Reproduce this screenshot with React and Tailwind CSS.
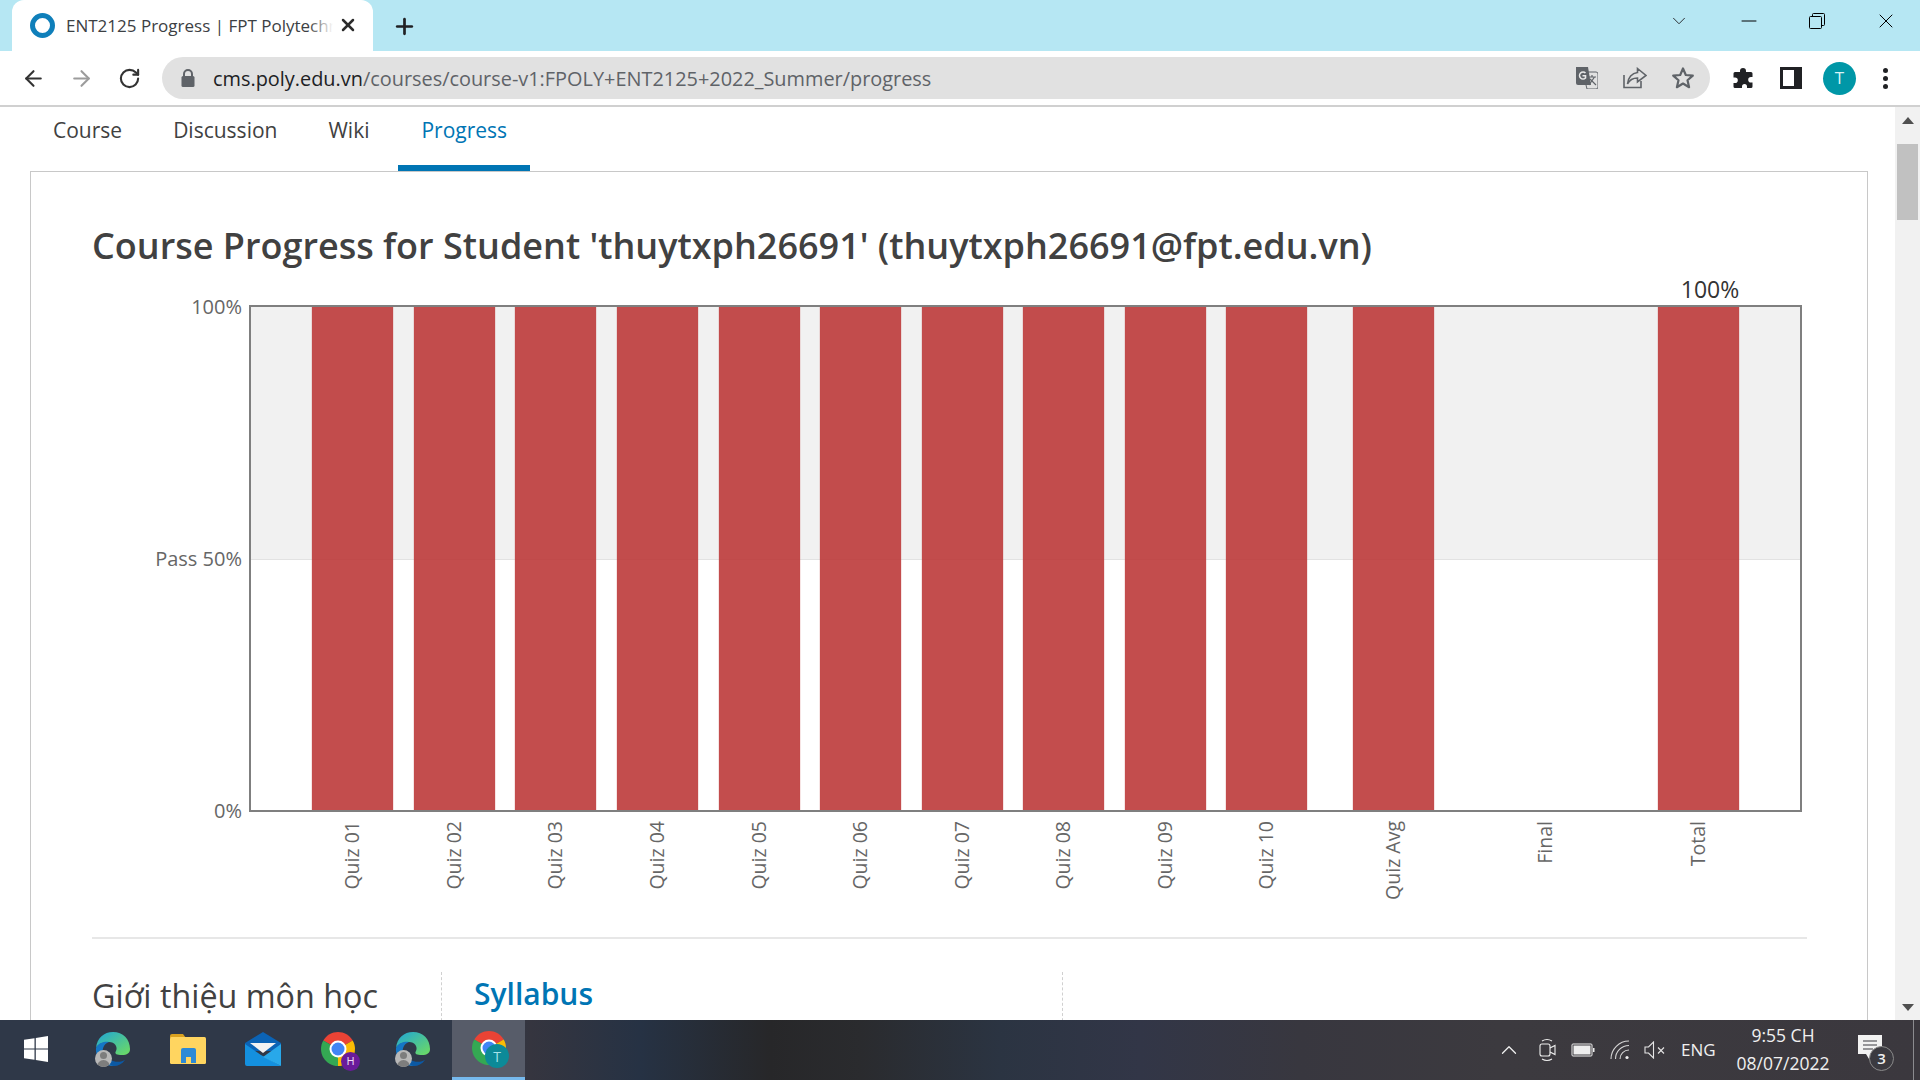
import React from 'react';
import { ArrowLeft, ArrowRight, RotateCw, Plus, X, ChevronDown, ChevronUp, Minus } from 'lucide-react';

const bars = [
  { label: 'Quiz 01', x: 312 },
  { label: 'Quiz 02', x: 414 },
  { label: 'Quiz 03', x: 515 },
  { label: 'Quiz 04', x: 617 },
  { label: 'Quiz 05', x: 719 },
  { label: 'Quiz 06', x: 820 },
  { label: 'Quiz 07', x: 922 },
  { label: 'Quiz 08', x: 1023 },
  { label: 'Quiz 09', x: 1125 },
  { label: 'Quiz 10', x: 1226 },
  { label: 'Quiz Avg', x: 1353 },
  { label: 'Final', x: 1505, empty: true },
  { label: 'Total', x: 1658 },
];

// svg sits at page x=92, y=270
const ox = 92;
const oy = 270;

const ProgressChart = () => (
  <svg width="1715" height="669" className="block" style={{ fontFamily: '"Open Sans", sans-serif' }}>
    <rect x={250 - ox} y={306 - oy} width="1551" height="253" fill="#f1f1f1" />
    <line x1={250 - ox} x2={1801 - ox} y1={559.5 - oy} y2={559.5 - oy} stroke="#e2e2e2" />
    {bars.filter(b => !b.empty).map(b => (
      <rect
        key={b.label}
        x={b.x - ox}
        y={306 - oy}
        width="81"
        height="505"
        fill="#bd3a3a"
        fillOpacity="0.9"
        stroke="#c34b4b"
        strokeOpacity="0.3"
      />
    ))}
    <rect x={250 - ox} y={306 - oy} width="1551" height="505" fill="none" stroke="#7f7f7f" strokeWidth="2" />
    <g fontSize="20" fill="#666666" textAnchor="end">
      <text x={242 - ox} y={314 - oy}>100%</text>
      <text x={242 - ox} y={566 - oy}>Pass 50%</text>
      <text x={242 - ox} y={818 - oy}>0%</text>
    </g>
    <text x={1710 - ox} y={298 - oy} fontSize="23" fill="#333333" textAnchor="middle">100%</text>
    {bars.map(b => {
      const cx = b.x + 40 - ox + 7;
      return (
        <text
          key={b.label}
          transform={`translate(${cx} ${821 - oy}) rotate(-90)`}
          fontSize="19.5"
          fill="#666666"
          textAnchor="end"
        >
          {b.label}
        </text>
      );
    })}
  </svg>
);

const Chrome = ({ size = 36 }) => (
  <svg width={size} height={size} viewBox="0 0 36 36">
    <path d="M18 18 L3.3 9.5 A17 17 0 0 1 32.7 9.5 Z" fill="#ea4335" />
    <path d="M18 18 L32.7 9.5 A17 17 0 0 1 18 35 Z" fill="#fbbc04" />
    <path d="M18 18 L18 35 A17 17 0 0 1 3.3 9.5 Z" fill="#34a853" />
    <circle cx="18" cy="18" r="8.5" fill="#fff" />
    <circle cx="18" cy="18" r="6.5" fill="#4285f4" />
  </svg>
);

const Edge = () => (
  <div className="relative w-9 h-9">
    <svg width="36" height="36" viewBox="0 0 36 36">
      <defs>
        <linearGradient id="edgeA" x1="0" y1="0" x2="1" y2="1">
          <stop offset="0" stopColor="#1fa5d8" />
          <stop offset="1" stopColor="#6fdc5f" />
        </linearGradient>
      </defs>
      <path d="M1 17 C2 7 9 1 18 1 C28 1 35 8 35 18 C35 22 32 24 27 24 C22 24 19 23 21 20 C23 16 20 11 14 11 C8 11 3 13 1 17 Z" fill="url(#edgeA)" />
      <path d="M1 17 C3 12 9 10 14 11 C8 13 6 20 9 26 C11 31 16 34 21 35 C10 36 0 28 1 17 Z" fill="#1576c4" />
      <path d="M12 24 C14 30 22 33 30 29 C27 33 23 35 19 35 C15 35 12 30 12 24 Z" fill="#0c59a4" />
    </svg>
    <span className="absolute left-0 bottom-0 w-[17px] h-[17px] rounded-full bg-[#b8b8b8] overflow-hidden flex flex-col items-center">
      <span className="w-[7px] h-[7px] rounded-full bg-[#7d7d7d] mt-[2px]" />
      <span className="w-[13px] h-[8px] rounded-t-full bg-[#7d7d7d] mt-[1px]" />
    </span>
  </div>
);

const Folder = () => (
  <svg width="36" height="32" viewBox="0 0 36 32">
    <path d="M0 3 Q0 1 2 1 H13 L16 5 H0 Z" fill="#d9a11f" />
    <rect x="0" y="4" width="36" height="27" rx="1.5" fill="#ffd560" />
    <path d="M11 30 V17 Q11 15 13 15 H24 Q26 15 26 17 V30 H21 V24 H16 V30 Z" fill="#2c8ad6" />
  </svg>
);

const Mail = () => (
  <svg width="36" height="36" viewBox="0 0 36 36">
    <path d="M0 12 L18 1 L36 12 V20 H0 Z" fill="#0b63b5" />
    <path d="M5 12 H31 L18 22 Z" fill="#f2f2f2" />
    <path d="M16 24 L36 35 H2 Q0 35 0 33 V13 Z" fill="#1490df" />
    <path d="M18 26 L36 13 V35 Z" fill="#28a8ea" />
  </svg>
);

const TaskIcon = ({ active, children }) => (
  <div className={`relative h-[60px] shrink-0 flex items-center justify-center pb-[2px] ${active ? 'ml-[2px] w-[73px] bg-[#575c69] border-b-[3px] border-[#76b9ed]' : 'w-[75px]'}`}>
    {children}
  </div>
);

const App = () => {
  return (
    <div
      className="relative w-[1920px] h-[1080px] overflow-hidden flex flex-col bg-white"
      style={{ fontFamily: '"Open Sans", sans-serif' }}
    >
      {/* tab strip */}
      <div className="h-[51px] shrink-0 bg-[#b6e7f3] flex items-end pl-[12px]">
        <div className="w-[361px] h-[51px] bg-white rounded-t-[12px] flex items-center pl-[18px] relative">
          <span className="w-[25px] h-[25px] rounded-full border-[5px] border-[#0f7fba] shrink-0" />
          <span className="ml-[11px] w-[267px] whitespace-nowrap overflow-hidden text-[17px] text-[#3c4043] relative">
            ENT2125 Progress | FPT Polytechnic
            <span className="absolute right-0 top-0 h-full w-[24px] bg-gradient-to-r from-transparent to-white" />
          </span>
          <X size={20} strokeWidth={3} className="absolute left-[326px] top-[15px] text-[#2c2c2c]" />
        </div>
        <Plus size={25} strokeWidth={2.6} className="ml-[19px] mb-[12px] text-[#202124]" />
        <div className="ml-auto flex items-center h-[42px] self-start">
          <ChevronDown size={22} strokeWidth={1} className="text-[#202124] mr-[47px]" />
          <Minus size={24} strokeWidth={1} className="text-black mr-[48px]" />
          <svg width="16" height="16" viewBox="0 0 16 16" fill="none" stroke="#000" className="mr-[49px]">
            <rect x="0.5" y="3.5" width="12" height="12" rx="1" />
            <path d="M3.5 3.5 V1.5 Q3.5 .5 4.5 .5 H14.5 Q15.5 .5 15.5 1.5 V11.5 Q15.5 12.5 14.5 12.5 H12.5" />
          </svg>
          <X size={24} strokeWidth={1} className="text-black mr-[22px]" />
        </div>
      </div>

      {/* toolbar */}
      <div className="h-[56px] shrink-0 bg-white border-b-2 border-[#d0d0d0] flex items-center relative">
        <ArrowLeft size={25} strokeWidth={2} className="ml-[21px] text-[#333]" />
        <ArrowRight size={25} strokeWidth={2} className="ml-[23px] text-[#9c9c9c]" />
        <RotateCw size={23} strokeWidth={2.2} className="ml-[24px] text-[#333]" />
        <div className="ml-[21px] w-[1548px] h-[42px] rounded-full bg-[#e1e1e1] flex items-center pl-[19px] relative">
          <svg width="14" height="18" viewBox="0 0 14 18">
            <path d="M3 8 V5 a4 4 0 0 1 8 0 V8" fill="none" stroke="#5f6368" strokeWidth="2" />
            <rect x="0.5" y="7" width="13" height="11" rx="1.5" fill="#5f6368" />
          </svg>
          <span className="ml-[18px] pt-[2px] text-[19.9px] whitespace-nowrap text-[#5f6368]">
            <span className="text-[#202124]">cms.poly.edu.vn</span>/courses/course-v1:FPOLY+ENT2125+2022_Summer/progress
          </span>
          {/* translate */}
          <svg width="22" height="22" viewBox="0 0 22 22" className="absolute left-[1414px] top-[10px]">
            <path d="M0 0 H12 L15 18 H2 Q0 18 0 16 Z" fill="#5f6368" />
            <path d="M10 5 H20 Q22 5 22 7 V20 Q22 22 20 22 H11 L10 18" fill="none" stroke="#5f6368" />
            <path d="M9.5 6 A3.5 3.5 0 1 0 9.5 11 V8.7 H6.5" fill="none" stroke="#e8e8e8" strokeWidth="1.6" />
            <path d="M12 10 H20 M16 8 V10 M13 18 L18.5 10 M14 12 L20 18" fill="none" stroke="#5f6368" strokeWidth="1.2" />
          </svg>
          <svg width="24" height="22" viewBox="0 0 24 22" fill="none" stroke="#5f6368" strokeWidth="1.6" className="absolute left-[1461px] top-[10px]">
            <path d="M1 8 V20.5 H18 V14" />
            <path d="M14.5 1.5 L23 8.5 L14.5 15 V11 C9.5 11 6.5 13 4.5 17 C5 10.5 9 6 14.5 5.5 Z" />
          </svg>
          <svg width="24" height="24" viewBox="0 0 24 24" fill="none" stroke="#5f6368" strokeWidth="2.2" strokeLinejoin="round" className="absolute left-[1509px] top-[9px]">
            <path d="M12 2.5 L14.8 9 L21.8 9.6 L16.5 14.3 L18.1 21.2 L12 17.5 L5.9 21.2 L7.5 14.3 L2.2 9.6 L9.2 9 Z" />
          </svg>
        </div>
        <svg width="22" height="22" viewBox="0 0 22 22" fill="#202124" className="ml-[22px]">
          <path d="M8 4 a3 3 0 0 1 6 0 V5 H19 a1.5 1.5 0 0 1 1.5 1.5 V10 H19 a2.8 2.8 0 0 0 0 5.6 H20.5 V19.5 a1.5 1.5 0 0 1 -1.5 1.5 H15 V19.5 a2.5 2.5 0 0 0 -5 0 V21 H3 a1.5 1.5 0 0 1 -1.5 -1.5 V16 H3 a2.8 2.8 0 0 0 0 -5.6 H1.5 V6.5 A1.5 1.5 0 0 1 3 5 H8 Z" />
        </svg>
        <div className="ml-[26px] w-[22px] h-[22px] border-[3px] border-[#202124] flex">
          <span className="w-[11px] bg-white" />
          <span className="flex-1 bg-[#202124]" />
        </div>
        <span className="ml-[21px] w-[33px] h-[33px] rounded-full bg-[#0097a7] text-[#d9f3f6] text-[17px] flex items-center justify-center">T</span>
        <div className="ml-[27px] flex flex-col gap-[3px]">
          <span className="w-[5px] h-[5px] rounded-full bg-[#202124]" />
          <span className="w-[5px] h-[5px] rounded-full bg-[#202124]" />
          <span className="w-[5px] h-[5px] rounded-full bg-[#202124]" />
        </div>
      </div>

      {/* page */}
      <div className="flex-1 min-h-0 flex">
        <div className="w-[1895px] overflow-hidden">
          <nav className="h-[64px] flex pl-[30px] text-[21px] text-[#414141]">
            <a className="px-[23px] pt-[8px]">Course</a>
            <a className="px-[28px] pt-[8px]">Discussion</a>
            <a className="pl-[23px] pr-[29px] pt-[8px]">Wiki</a>
            <a className="px-[23px] pt-[8px] text-[#0075b4] border-b-[6px] border-[#0075b4]">Progress</a>
          </nav>
          <div className="ml-[30px] w-[1838px] h-[900px] border border-[#c8c8c8] pl-[61px] pr-[60px]">
            <h1 className="h-[98px] pt-[46px] text-[36px] leading-[56px] font-semibold text-[#414141] whitespace-nowrap">
              Course Progress for Student 'thuytxph26691' (thuytxph26691@fpt.edu.vn)
            </h1>
            <ProgressChart />
            <div className="border-t-2 border-[#e7e7e7] flex mt-[-2px] pt-[33px]">
              <h2 className="w-[349px] h-[80px] text-[32.3px] leading-[46px] text-[#414141] whitespace-nowrap">Giới thiệu môn học</h2>
              <div className="w-[622px] h-[80px] border-l border-r border-dashed border-[#d0d0d0] pl-[32px]">
                <h3 className="text-[30px] leading-[44px] font-semibold text-[#0075b4]">Syllabus</h3>
              </div>
            </div>
          </div>
        </div>
        {/* scrollbar */}
        <div className="w-[25px] bg-[#f1f1f1] flex flex-col items-center relative">
          <span className="mt-[10px] w-0 h-0 border-l-[6px] border-r-[6px] border-b-[7px] border-l-transparent border-r-transparent border-b-[#505050]" />
          <span className="mt-[20px] w-[21px] h-[76px] bg-[#c1c1c1]" />
          <span className="mt-auto mb-[9px] w-0 h-0 border-l-[6px] border-r-[6px] border-t-[7px] border-l-transparent border-r-transparent border-t-[#505050]" />
        </div>
      </div>

      <div className="h-[60px] shrink-0 flex items-center bg-[linear-gradient(to_right,#2f3848_0px,#2f3848_500px,#35353f_530px,#263244_640px,#272729_770px,#2a2b2e_860px,#2b3442_1000px,#323647_1140px,#38373f_1300px,#3c3a3f_1500px,#3b383e_1920px)] text-white">
        <TaskIcon>
          <svg width="24" height="26" viewBox="0 0 24 26" fill="#fff" className="-ml-[3px]">
            <path d="M0 3.7 L10.5 2.2 V12.4 H0 Z M11.8 2 L24 0 V12.4 H11.8 Z M0 13.6 H10.5 V23.8 L0 22.3 Z M11.8 13.6 H24 V26 L11.8 24 Z" />
          </svg>
        </TaskIcon>
        <TaskIcon><Edge /></TaskIcon>
        <TaskIcon><Folder /></TaskIcon>
        <TaskIcon><Mail /></TaskIcon>
        <TaskIcon>
          <Chrome />
          <span className="absolute left-[41px] top-[32px] w-[19px] h-[19px] rounded-full bg-[#6a1b9a] text-[11px] text-[#f0e0f5] flex items-center justify-center">H</span>
        </TaskIcon>
        <TaskIcon><Edge /></TaskIcon>
        <TaskIcon active>
          <Chrome />
          <span className="absolute left-[33px] top-[24px] w-[24px] h-[24px] rounded-full bg-[#0c8a98] text-[14px] text-[#a5e3ea] flex items-center justify-center">T</span>
        </TaskIcon>

        <div className="ml-auto flex items-center text-[#f0f0f0] h-full">
          <ChevronUp size={26} strokeWidth={1.2} className="mr-[17px]" />
          <svg width="18" height="24" viewBox="0 0 18 24" fill="none" stroke="#eee" strokeWidth="1.1" className="mr-[14px]">
            <path d="M3 3 Q8 0 13 3 M3 21 Q8 24 13 21" />
            <rect x="1" y="6" width="10" height="12" rx="2" />
            <path d="M11 10 L16 7.5 V16.5 L11 14" />
          </svg>
          <svg width="24" height="14" viewBox="0 0 24 14" className="mr-[15px]">
            <rect x="1" y="1" width="20" height="12" rx="1" fill="none" stroke="#eee" />
            <rect x="2.5" y="2.5" width="17" height="9" fill="#eee" />
            <rect x="22" y="5" width="1.5" height="4" fill="#eee" />
          </svg>
          <svg width="20" height="20" viewBox="0 0 20 20" fill="none" stroke="#d5d5d5" strokeWidth="1.1" className="mr-[14px]">
            <path d="M1 19 A18 18 0 0 1 19 1 M5.5 19 A13.5 13.5 0 0 1 19 5.5 M10 19 A9 9 0 0 1 19 10" />
            <circle cx="17" cy="17.5" r="1.6" fill="#eee" stroke="none" />
          </svg>
          <svg width="22" height="18" viewBox="0 0 22 18" fill="none" stroke="#e5e5e5" strokeWidth="1.1" className="mr-[15px]">
            <path d="M1 6 H4.5 L9.5 1 V17 L4.5 12 H1 Z" />
            <path d="M14 6.5 L20 12.5 M20 6.5 L14 12.5" />
          </svg>
          <span className="text-[17px] w-[40px] mr-[9px]">ENG</span>
          <div className="w-[106px] flex flex-col items-center text-[17.5px] leading-[28px] pb-[2px] whitespace-nowrap">
            <span>9:55 CH</span>
            <span>08/07/2022</span>
          </div>
          <div className="relative ml-[22px] mr-[38px] w-[24px] h-[24px] mb-[6px]">
            <svg width="24" height="24" viewBox="0 0 24 24">
              <path d="M0 0 H24 V19 H14 L11 24 L8 19 H0 Z" fill="#f2f2f2" />
              <path d="M5 6 H19 M5 10 H19 M5 14 H15" stroke="#3a3a40" strokeWidth="1" />
            </svg>
            <span className="absolute left-[11px] top-[11px] w-[25px] h-[25px] rounded-full bg-[#3b3a40] border border-[#8a8a8a] text-[15px] font-semibold flex items-center justify-center">3</span>
          </div>
        </div>
        <span className="absolute left-[1913px] top-[1020px] w-[1px] h-[60px] bg-[#8b8b8f]" />
      </div>
    </div>
  );
};

export default App;
